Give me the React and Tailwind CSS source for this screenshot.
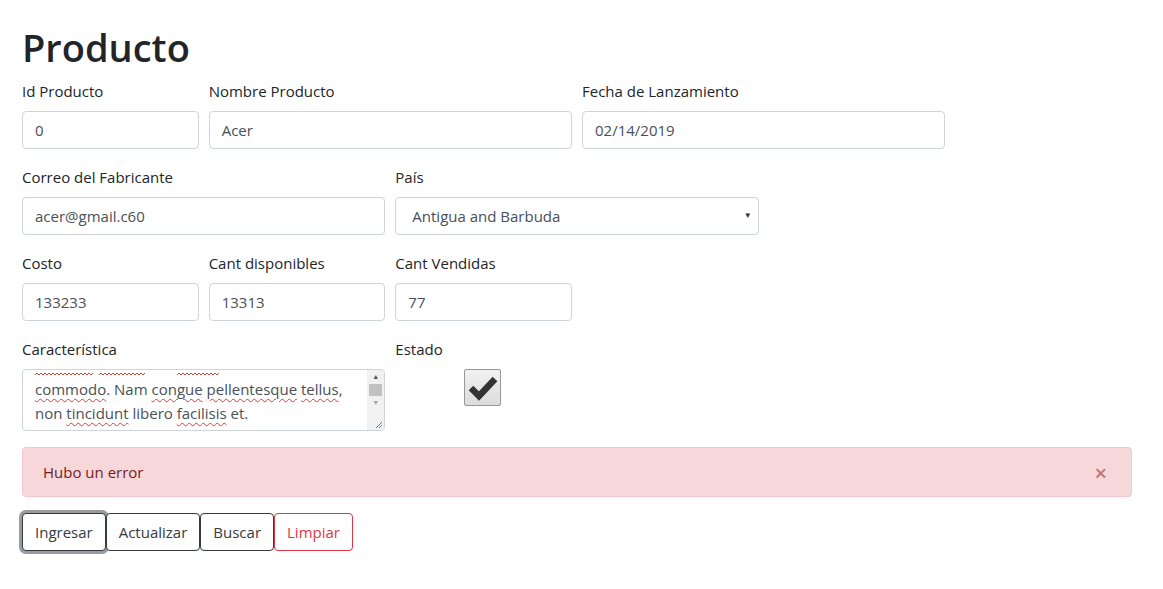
import React from "react";

const font = { fontFamily: '"Open Sans", "Noto Sans", sans-serif' };

function Field({ label, span = "col-span-1", children }) {
  return (
    <div className={`${span} mb-4`}>
      <div className="mb-2 h-6 leading-6 text-[15px] text-[#212529]">{label}</div>
      {children}
    </div>
  );
}

function Input({ value }) {
  return (
    <div className="h-[38px] rounded border border-[#ced4da] bg-white px-3 leading-[37px] text-[15px] text-[#495057]">
      {value}
    </div>
  );
}

const sq = "underline decoration-wavy decoration-[#e53935] decoration-1 underline-offset-[3px]";

function Wave({ w }) {
  return (
    <svg width={w} height="4" viewBox={`0 0 ${w} 4`} className="block">
      <path
        d={Array.from({ length: Math.ceil(w / 4) }, (_, i) => `${i === 0 ? "M" : "L"}${i * 4} 3 L${i * 4 + 2} 1`).join(" ")}
        stroke="#e53935"
        strokeWidth="1"
        fill="none"
      />
    </svg>
  );
}

export default function App() {
  return (
    <div className="min-h-[589px] bg-white pl-[22px] pt-[23px]" style={font}>
      <h1 className="mb-2 h-12 text-[38px] font-semibold leading-[48px] text-[#212529]">Producto</h1>
      <div className="grid w-[1110px] grid-cols-6 gap-x-[10px]">
        <Field label="Id Producto"><Input value="0" /></Field>
        <Field label="Nombre Producto" span="col-span-2"><Input value="Acer" /></Field>
        <Field label="Fecha de Lanzamiento" span="col-span-2"><Input value="02/14/2019" /></Field>
        <div className="col-span-1" />

        <Field label="Correo del Fabricante" span="col-span-2"><Input value="acer@gmail.c60" /></Field>
        <Field label="País" span="col-span-2">
          <div className="relative flex h-[38px] items-center rounded border border-[#ced4da] bg-white pl-4 text-[15px] text-[#495057]">
            Antigua and Barbuda
            <span className="absolute right-[6px] top-[13px] text-[8px] leading-none text-[#333]">▼</span>
          </div>
        </Field>
        <div className="col-span-2" />

        <Field label="Costo"><Input value="133233" /></Field>
        <Field label="Cant disponibles"><Input value="13313" /></Field>
        <Field label="Cant Vendidas"><Input value="77" /></Field>
        <div className="col-span-3" />

        <Field label="Característica" span="col-span-2">
          <div className="relative h-[62px] overflow-hidden rounded border border-[#ced4da] bg-white text-[15px] leading-6 text-[#495057]">
            <div className="absolute left-[12px] top-[2px] flex gap-[6px]">
              <Wave w={58} />
              <Wave w={46} />
              <div className="w-[20px]" />
              <Wave w={42} />
            </div>
            <div className="absolute left-3 top-[7px] pr-5">
              <div><span className={sq}>commodo</span>. Nam <span className={sq}>congue</span> <span className={sq}>pellentesque</span> <span className={sq}>tellus</span>,</div>
              <div>non <span className={sq}>tincidunt</span> libero <span className={sq}>facilisis</span> et.</div>
            </div>
            <div className="absolute right-0 top-0 flex h-full w-[17px] flex-col items-center bg-[#f1f1f1]">
              <div className="flex h-[14px] items-center justify-center text-[7px] text-[#505050]">▲</div>
              <div className="h-[12px] w-[13px] bg-[#c1c1c1]" />
              <div className="flex h-[14px] items-center justify-center text-[7px] text-[#a3a3a3]">▼</div>
              <div className="relative flex-1 w-full">
                <svg className="absolute bottom-[1px] right-[1px]" width="8" height="8" viewBox="0 0 8 8">
                  <path d="M7 1 L1 7 M7 4 L4 7" stroke="#777" strokeWidth="1" />
                </svg>
              </div>
            </div>
          </div>
        </Field>
        <Field label="Estado">
          <div className="ml-[69px] flex h-[37px] w-[37px] items-center justify-center rounded-[2px] border border-[#999] bg-gradient-to-b from-[#f2f2f2] to-[#dcdcdc]">
            <svg width="30" height="26" viewBox="0 0 30 26">
              <path d="M3 13 L11 21 L27 4" stroke="#333" strokeWidth="6.5" fill="none" strokeLinejoin="miter" />
            </svg>
          </div>
        </Field>
      </div>

      <div className="mb-4 flex h-[50px] w-[1110px] items-center justify-between rounded border border-[#f5c6cb] bg-[#f8d7da] pl-5 pr-5 text-[15px] text-[#721c24]">
        <span>Hubo un error</span>
        <span className="mr-[4px] text-[22px] font-semibold leading-none text-[#721c24] opacity-50">×</span>
      </div>

      <div className="flex">
        <button className="h-[38px] rounded border border-[#343a40] bg-white px-3 text-[15px] text-[#343a40] shadow-[0_0_0_3px_rgba(52,58,64,0.5)]">Ingresar</button>
        <button className="h-[38px] rounded border border-[#343a40] bg-white px-3 text-[15px] text-[#343a40]">Actualizar</button>
        <button className="h-[38px] rounded border border-[#343a40] bg-white px-3 text-[15px] text-[#343a40]">Buscar</button>
        <button className="h-[38px] rounded border border-[#dc3545] bg-white px-3 text-[15px] text-[#dc3545]">Limpiar</button>
      </div>
    </div>
  );
}
